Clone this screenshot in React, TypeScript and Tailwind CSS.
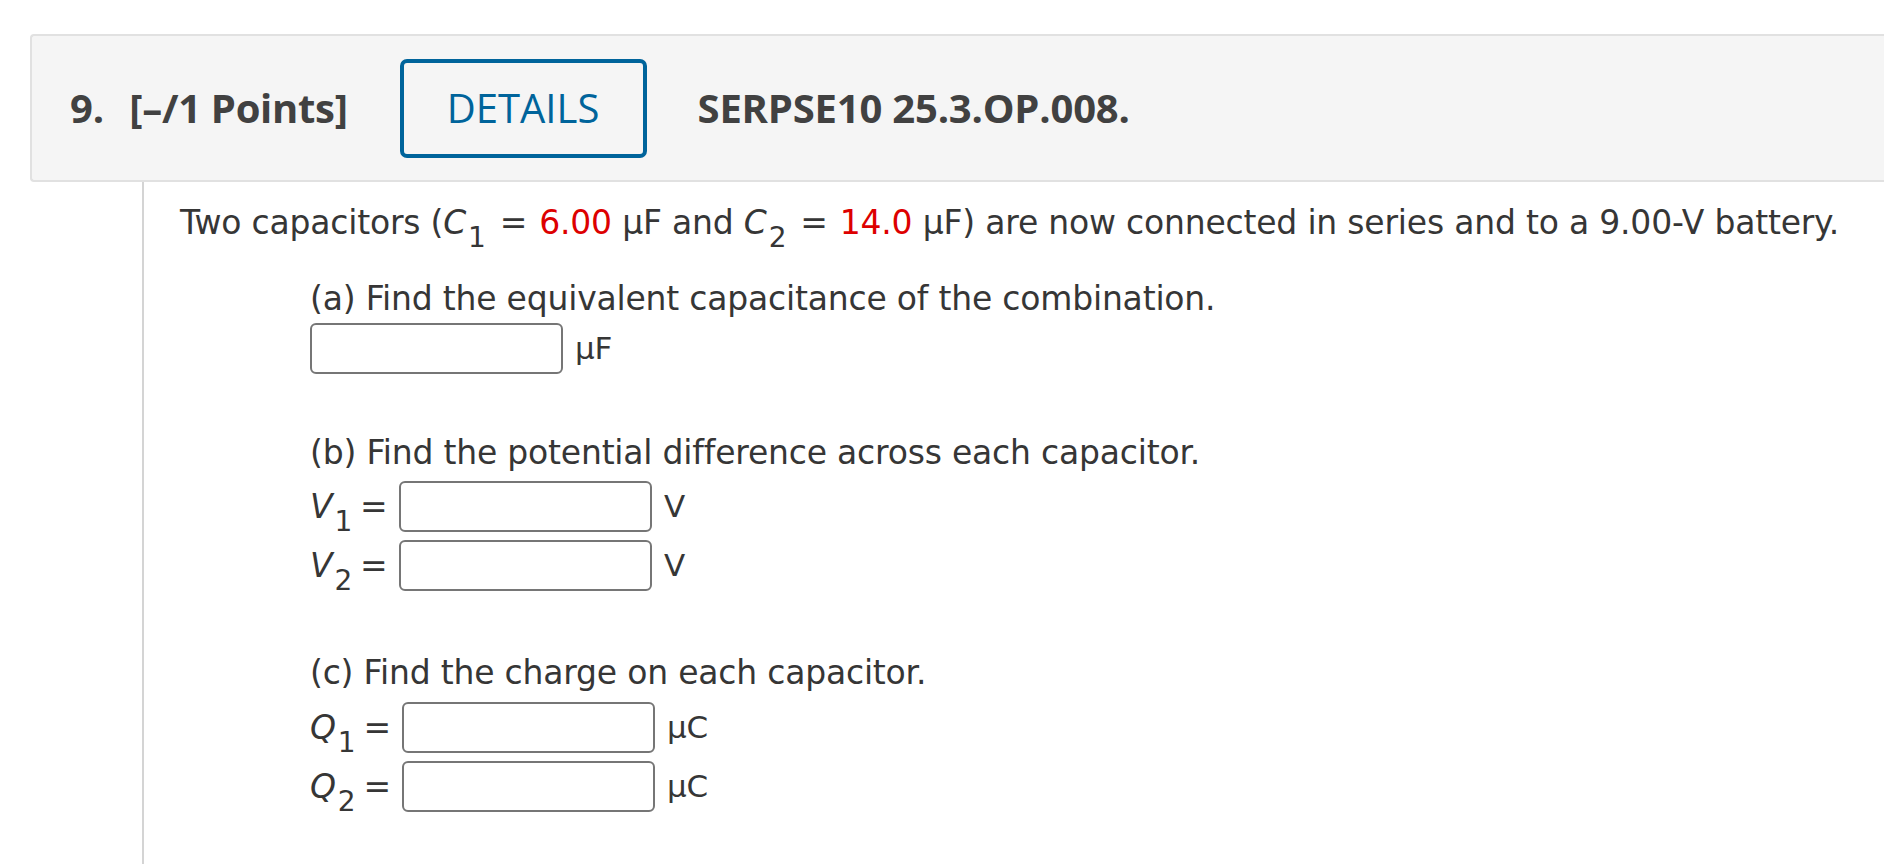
import React from "react";

// small helpers for the math bits (italic letter + lowered index)
function Sym({ letter, index }: { letter: string; index: string }) {
  return (
    <span className="whitespace-nowrap">
      <span className="italic">{letter}</span>
      <span className="relative top-[13px] ml-[2px] text-[28px] leading-none">{index}</span>
    </span>
  );
}

function Answer({ unit }: { unit: string }) {
  return (
    <div className="flex items-center">
      <input
        type="text"
        className="h-[51px] w-[253px] rounded-[6px] border-2 border-[#767676] bg-white outline-none"
      />
      <span className="ml-[12px] text-[31px] leading-none">{unit}</span>
    </div>
  );
}

function Labelled({ letter, index, unit, wide }: { letter: string; index: string; unit: string; wide?: boolean }) {
  return (
    <div className="flex items-center">
      <span className={`flex items-center leading-none ${wide ? "w-[92px]" : "w-[89px]"}`}>
        <Sym letter={letter} index={index} />
        <span className="ml-[8px]">=</span>
      </span>
      <Answer unit={unit} />
    </div>
  );
}

export default function App() {
  return (
    <div className="min-h-screen w-full overflow-hidden bg-white text-[#363636]">
      <div className="pt-[34px]">
        <div className="-mr-[12px] ml-[30px] flex h-[148px] items-center rounded-l-[4px] border-2 border-r-0 border-[#e1e1e1] bg-[#f5f5f5] pl-[38px] font-['Open_Sans',sans-serif] text-[40px] text-[#414141]">
          <span className="font-bold">9.</span>
          <span className="ml-[25px] font-bold tracking-[-0.3px]">[–/1 Points]</span>
          <button
            type="button"
            className="ml-[52px] flex h-[99px] w-[247px] items-center justify-center rounded-[7px] border-4 border-[#00649b] font-medium text-[#00649b]"
          >
            DETAILS
          </button>
          <span className="ml-[51px] font-bold tracking-[-0.2px]">SERPSE10 25.3.OP.008.</span>
        </div>
      </div>

      <div className="ml-[142px] min-h-[682px] border-l-2 border-[#d4d4d4] pl-[36px] pt-[21px] font-['DejaVu_Sans','Verdana',sans-serif] text-[33px] leading-[40px] tracking-[-0.2px]">
        <p className="whitespace-nowrap">
          Two capacitors (<Sym letter="C" index="1" />
          <span className="ml-[14px] mr-[12px]">=</span>
          <span className="text-[#dd0000]">6.00</span> μF and <Sym letter="C" index="2" />
          <span className="ml-[14px] mr-[12px]">=</span>
          <span className="text-[#dd0000]">14.0</span> μF) are now connected in series and to a 9.00-V battery.
        </p>

        <div className="ml-[130px]">
          <p className="mt-[36px]">(a) Find the equivalent capacitance of the combination.</p>
          <div className="mt-[4px]">
            <Answer unit="μF" />
          </div>

          <p className="mt-[59px]">(b) Find the potential difference across each capacitor.</p>
          <div className="mt-[8px] flex flex-col gap-[8px]">
            <Labelled letter="V" index="1" unit="V" />
            <Labelled letter="V" index="2" unit="V" />
          </div>

          <p className="mt-[62px]">(c) Find the charge on each capacitor.</p>
          <div className="mt-[9px] flex flex-col gap-[8px]">
            <Labelled letter="Q" index="1" unit="μC" wide />
            <Labelled letter="Q" index="2" unit="μC" wide />
          </div>
        </div>
      </div>
    </div>
  );
}
